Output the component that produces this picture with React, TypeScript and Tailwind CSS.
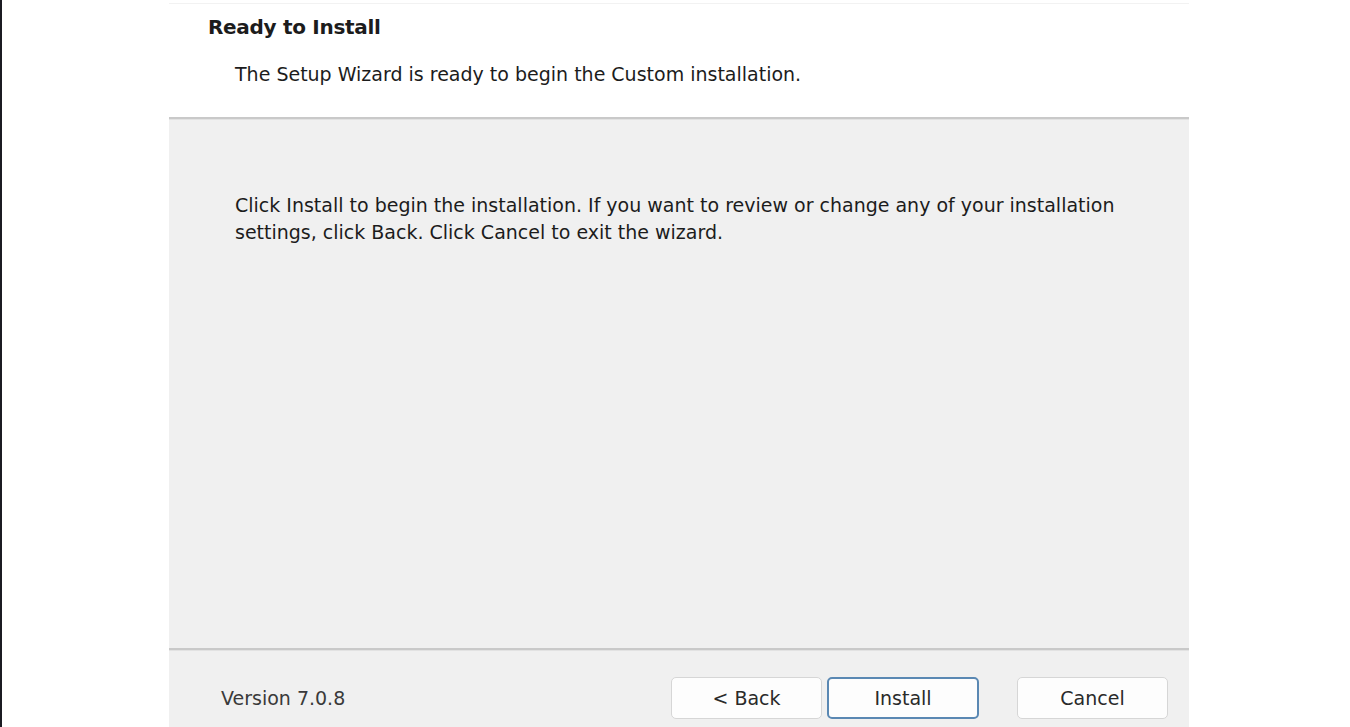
import React from "react";

export default function App() {
  const font = { fontFamily: '"DejaVu Sans", Tahoma, sans-serif' };
  return (
    <div className="w-[1350px] h-[727px] bg-white flex overflow-hidden text-[#1c1c1c]" style={font}>
      <div className="w-[2px] h-full bg-[#1b1b22]" />
      <div className="w-[167px]" />
      <div className="w-[1020px] h-full flex flex-col">
        <div className="h-[114px] bg-white border-t border-[#f2f2f2] mt-[3px] flex flex-col">
          <div className="pl-[39px] pt-[10px] text-[20px] font-bold leading-[26px] tracking-[-0.3px]">Ready to Install</div>
          <div className="pl-[66px] pt-[21px] text-[19px] leading-[26px]">The Setup Wizard is ready to begin the Custom installation.</div>
        </div>
        <div className="h-[3px] bg-[#c9c9c9] border-b border-[#e2e2e2]" />
        <div className="flex-1 bg-[#f0f0f0] pl-[66px] pt-[72px] text-[19px] leading-[27px]">
          <div>Click Install to begin the installation. If you want to review or change any of your installation</div>
          <div>settings, click Back. Click Cancel to exit the wizard.</div>
        </div>
        <div className="h-[3px] bg-[#c9c9c9] border-b border-[#e2e2e2]" />
        <div className="h-[76px] bg-[#f0f0f0] flex items-center pl-[52px] pr-[21px] pt-[24px] pb-[6px]">
          <div className="text-[19px] text-[#3a3a3a]">Version 7.0.8</div>
          <div className="flex-1" />
          <button className="w-[151px] h-[42px] bg-[#fdfdfd] border border-[#d6d6d6] rounded-[5px] text-[19px] text-[#2a2a2a]">&lt; Back</button>
          <button className="ml-[5px] w-[152px] h-[42px] bg-[#fdfdfd] border-2 border-[#5a88b3] rounded-[5px] text-[19px] text-[#2a2a2a]">Install</button>
          <button className="ml-[38px] w-[151px] h-[42px] bg-[#fdfdfd] border border-[#d6d6d6] rounded-[5px] text-[19px] text-[#2a2a2a]">Cancel</button>
        </div>
      </div>
    </div>
  );
}
